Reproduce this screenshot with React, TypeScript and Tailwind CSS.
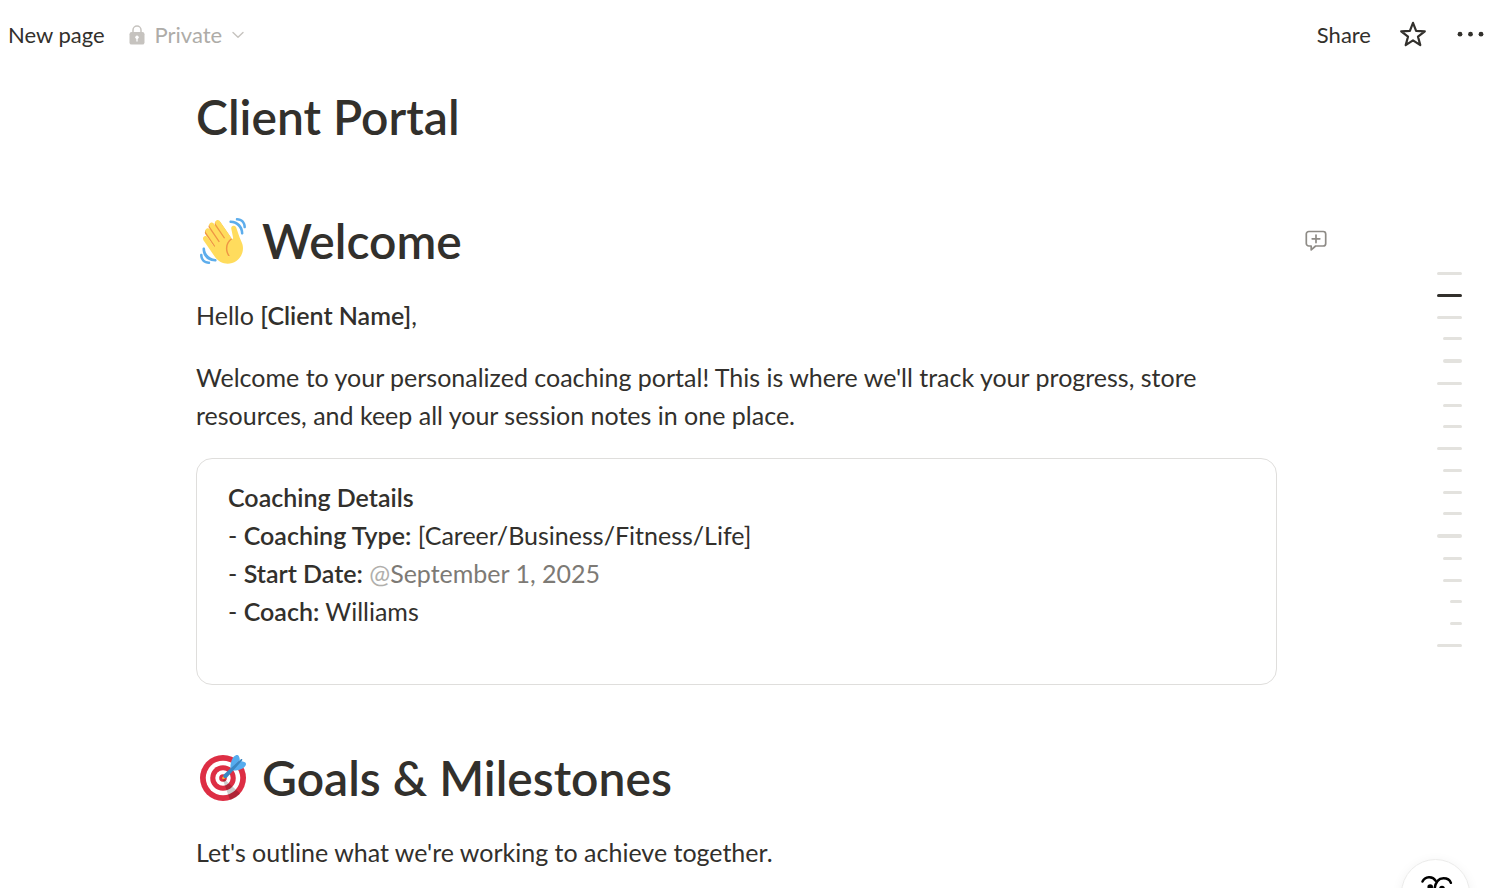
import type { ReactNode } from "react";

function WaveIcon() {
  return (
    <svg viewBox="0 0 36 36" className="size-[46px] shrink-0" role="img" aria-label="Waving hand">
      <path fill="#EF9645" d="M4.861 9.147c.94-.657 2.357-.531 3.201.166l-.968-1.407c-.779-1.111-.5-2.313.612-3.093 1.112-.777 4.263 1.312 4.263 1.312-.786-1.122-.639-2.544.483-3.331 1.122-.784 2.67-.513 3.456.611l10.292 14.72L25 31l-11.083-4.042L4.25 12.695c-.793-1.129-.519-2.686.611-3.548z" />
      <path fill="#FFDC5D" d="M2.695 17.336s-1.132-1.65.519-2.781c1.649-1.131 2.78.518 2.78.518l5.251 7.658c.181-.302.379-.6.6-.894L4.557 11.21s-1.131-1.649.519-2.78c1.649-1.131 2.78.518 2.78.518l6.855 9.997c.255-.208.516-.417.785-.622L7.549 6.732s-1.131-1.649.519-2.78c1.649-1.131 2.78.518 2.78.518l7.947 11.589c.292-.179.581-.334.871-.498L12.238 4.729s-1.131-1.649.518-2.78c1.649-1.131 2.78.518 2.78.518l7.854 11.454 1.194 1.742c-4.948 3.394-5.419 9.779-2.592 13.902.565.825 1.39.26 1.39.26-3.393-4.949-2.357-10.51 2.592-13.903L24.515 8.62s-.545-1.924 1.378-2.47c1.924-.545 2.47 1.379 2.47 1.379l1.685 5.004c.668 1.984 1.379 3.961 2.32 5.831 2.657 5.28 1.07 11.842-3.94 15.279-5.465 3.747-12.936 2.354-16.684-3.11L2.695 17.336z" />
      <g fill="#5DADEC">
        <path d="M12 32.042C8 32.042 3.958 28 3.958 24c0-.553-.405-1-.958-1s-1.042.447-1.042 1C1.958 30 6 34.042 12 34.042c.553 0 1-.489 1-1.042s-.447-.958-1-.958z" />
        <path d="M7 34c-3 0-5-2-5-5 0-.553-.447-1-1-1s-1 .447-1 1c0 4 3 7 7 7 .553 0 1-.447 1-1s-.447-1-1-1zM24 2c-.552 0-1 .448-1 1s.448 1 1 1c4 0 8 3.589 8 8 0 .552.448 1 1 1s1-.448 1-1c0-5.514-4-10-10-10z" />
        <path d="M29 .042c-.552 0-1 .406-1 .958s.448 1.042 1 1.042c3 0 4.958 2.225 4.958 4.958 0 .552.489 1 1.042 1s.958-.448.958-1C35.958 3.163 33 .042 29 .042z" />
      </g>
    </svg>
  );
}

function TargetIcon() {
  return (
    <svg viewBox="0 0 36 36" className="size-[46px] shrink-0" role="img" aria-label="Dart in target">
      <circle cx="18" cy="18" r="18" fill="#DD2E44" />
      <circle cx="18" cy="18" r="13.5" fill="#fff" />
      <circle cx="18" cy="18" r="10" fill="#DD2E44" />
      <circle cx="18" cy="18" r="6" fill="#fff" />
      <circle cx="18" cy="18" r="3" fill="#DD2E44" />
      <path opacity=".2" d="M18.24 18.282l13.144 11.754s-2.647 3.376-7.89 5.109L17.579 18.42l.661-.138z" />
      <path fill="#FFAC33" d="M18.294 19c-.255 0-.509-.097-.704-.292-.389-.389-.389-1.018 0-1.407l.563-.563c.389-.389 1.018-.389 1.408 0 .388.389.388 1.018 0 1.407l-.564.563c-.194.195-.448.292-.703.292z" />
      <path fill="#55ACEE" d="M24.016 6.981c-.403 2.079 0 4.691 0 4.691l7.054-7.388c.291-1.454-.528-3.932-1.718-4.238-1.19-.306-4.079.803-5.336 6.935zm5.003 5.003c-2.079.403-4.691 0-4.691 0l7.388-7.054c1.454-.291 3.932.528 4.238 1.718.306 1.19-.803 4.079-6.935 5.336z" />
      <path fill="#3A87C2" d="M32.798 4.485L21.176 17.587c-.362.362-1.673.882-2.51.046-.836-.836-.419-2.08-.057-2.443L31.815 3.501s.676-.635 1.159-.152-.176 1.136-.176 1.136z" />
    </svg>
  );
}

function TopBar() {
  return (
    <header className="flex h-[70px] items-center justify-between pr-[7px] pl-2 text-[22px] leading-[30px]">
      <div className="flex items-center gap-6">
        <a href="#page">New page</a>
        <button type="button" className="flex items-center text-[#aeaca8]">
          <svg viewBox="0 0 16 20" className="h-5 w-4" aria-hidden="true">
            <path d="M4 8V5a4 4 0 0 1 8 0v3" fill="none" stroke="#c6c3bf" strokeWidth="1.5" />
            <rect x=".5" y="7" width="15" height="12.6" rx="2.2" fill="#c6c3bf" />
            <circle cx="8" cy="12.2" r="1.7" fill="#fff" />
            <path d="M8 12v4" stroke="#fff" strokeWidth="1.3" strokeLinecap="round" />
          </svg>
          <span className="ml-2.5">Private</span>
          <svg viewBox="0 0 12 8" className="ml-2.5 h-2 w-3" fill="none" stroke="#c6c3bf" strokeWidth="1.4" strokeLinecap="round" strokeLinejoin="round" aria-hidden="true">
            <path d="M1 1.5 6 6.3 11 1.5" />
          </svg>
        </button>
      </div>
      <div className="flex items-center">
        <button type="button">Share</button>
        <button type="button" aria-label="Add to favorites" className="ml-7">
          <svg viewBox="0 0 28 28" className="size-7" fill="none" stroke="#32302c" strokeWidth="2.2" strokeLinejoin="round" aria-hidden="true">
            <path d="M14 1.8 17.1 9.9 25.8 10.3 19 15.7 21.3 24.1 14 19.3 6.7 24.1 9 15.7 2.2 10.3 10.9 9.9Z" />
          </svg>
        </button>
        <button type="button" aria-label="More options" className="ml-7">
          <svg viewBox="0 0 32 28" className="h-7 w-8" fill="#32302c" aria-hidden="true">
            <circle cx="5" cy="13.2" r="2.4" />
            <circle cx="15.5" cy="13.2" r="2.4" />
            <circle cx="26" cy="13.2" r="2.4" />
          </svg>
        </button>
      </div>
    </header>
  );
}

function SectionHeading({ icon, children, action }: { icon: ReactNode; children: ReactNode; action?: ReactNode }) {
  return (
    <div className="-mr-[50px] flex items-center justify-between">
      <h2 className="flex items-center gap-4 pl-1 text-5xl leading-[62px] font-semibold">
        {icon}
        <span>{children}</span>
      </h2>
      {action}
    </div>
  );
}

function CommentButton() {
  return (
    <button type="button" aria-label="Add comment">
      <svg viewBox="0 0 22 22" className="size-[22px]" fill="none" stroke="#8e8b86" strokeWidth="1.7" strokeLinejoin="round" strokeLinecap="round" aria-hidden="true">
        <path d="M3.8 1.5h14.4a2.5 2.5 0 0 1 2.5 2.5v9.5a2.5 2.5 0 0 1-2.5 2.5H10.6L6.2 19.9V16H3.8a2.5 2.5 0 0 1-2.5-2.5V4a2.5 2.5 0 0 1 2.5-2.5Z" />
        <path d="M11 5v7.6M7.2 8.8h7.6" />
      </svg>
    </button>
  );
}

const outline = [
  "h-[3px] w-[25px] bg-[#e3e2de]",
  "h-[3px] w-[25px] bg-[#32302c]",
  "h-[3px] w-[25px] bg-[#e3e2de]",
  "h-[3px] w-[19px] bg-[#e3e2de]",
  "h-1 w-[19px] bg-[#e3e2de]",
  "h-[3px] w-[25px] bg-[#e3e2de]",
  "h-[3px] w-[19px] bg-[#e3e2de]",
  "h-[3px] w-[19px] bg-[#e3e2de]",
  "h-[3px] w-[25px] bg-[#e3e2de]",
  "h-[3px] w-[19px] bg-[#e3e2de]",
  "h-[3px] w-[19px] bg-[#e3e2de]",
  "h-[3px] w-[19px] bg-[#e3e2de]",
  "h-1 w-[25px] bg-[#e3e2de]",
  "h-[3px] w-[19px] bg-[#e3e2de]",
  "h-[3px] w-[19px] bg-[#e3e2de]",
  "h-[3px] w-[12px] bg-[#e3e2de]",
  "h-[3px] w-[12px] bg-[#e3e2de]",
  "h-[3px] w-[25px] bg-[#e3e2de]",
];

function OutlineRail() {
  return (
    <nav aria-label="Page outline" className="fixed top-[272px] right-8 flex h-[375px] flex-col items-end justify-between">
      {outline.map((bar, i) => (
        <span key={i} className={`rounded-sm ${bar}`} />
      ))}
    </nav>
  );
}

function AssistantButton() {
  return (
    <button
      type="button"
      aria-label="Open assistant"
      className="fixed right-6 -bottom-10 flex size-[69px] justify-center rounded-full border border-[#ebebea] bg-white pt-3.5 shadow-[0_2px_12px_rgba(0,0,0,0.06)]"
    >
      <svg viewBox="0 0 34 34" className="size-[34px]" fill="none" stroke="#000" strokeWidth="2.5" strokeLinecap="round" aria-hidden="true">
        <path d="M3.5 7.5C6 2.2 13.5 1.6 16.5 6.6" />
        <path d="M15.5 15C16.5 8 20 4.2 24.5 4.2c3.6 0 6.4 1.8 7.4 4.6" />
        <circle cx="11.2" cy="13" r="2.8" fill="#000" stroke="none" />
        <circle cx="23" cy="14.6" r="2.8" fill="#000" stroke="none" />
      </svg>
    </button>
  );
}

export default function App() {
  return (
    <div className="h-screen overflow-hidden bg-white font-['Lato','Open_Sans',sans-serif] text-[#32302c]">
      <TopBar />
      <main className="pr-[217px] pl-[196px] text-[25px] leading-[38px]">
        <h1 className="pt-4 text-5xl leading-[62px] font-semibold">Client Portal</h1>
        <section className="pt-[62px]">
          <SectionHeading icon={<WaveIcon />} action={<CommentButton />}>
            Welcome
          </SectionHeading>
          <p className="mt-6">
            Hello <b className="font-semibold">[Client Name]</b>,
          </p>
          <p className="mt-6">
            Welcome to your personalized coaching portal! This is where we'll track your progress, store resources, and
            keep all your session notes in one place.
          </p>
          <div className="mt-6 rounded-2xl border border-[#dfdedc] px-[31px] pt-[19px] pb-[54px]">
            <p className="font-semibold">Coaching Details</p>
            <p>
              - <b className="font-semibold">Coaching Type:</b> [Career/Business/Fitness/Life]
            </p>
            <p>
              - <b className="font-semibold">Start Date:</b>{" "}
              <span className="text-[#7d7a75]">
                <span className="text-[#b1afac]">@</span>September 1, 2025
              </span>
            </p>
            <p>
              - <b className="font-semibold">Coach:</b> Williams
            </p>
          </div>
        </section>
        <section className="pt-[62px]">
          <SectionHeading icon={<TargetIcon />}>Goals &amp; Milestones</SectionHeading>
          <p className="mt-6">Let's outline what we're working to achieve together.</p>
        </section>
      </main>
      <OutlineRail />
      <AssistantButton />
    </div>
  );
}
